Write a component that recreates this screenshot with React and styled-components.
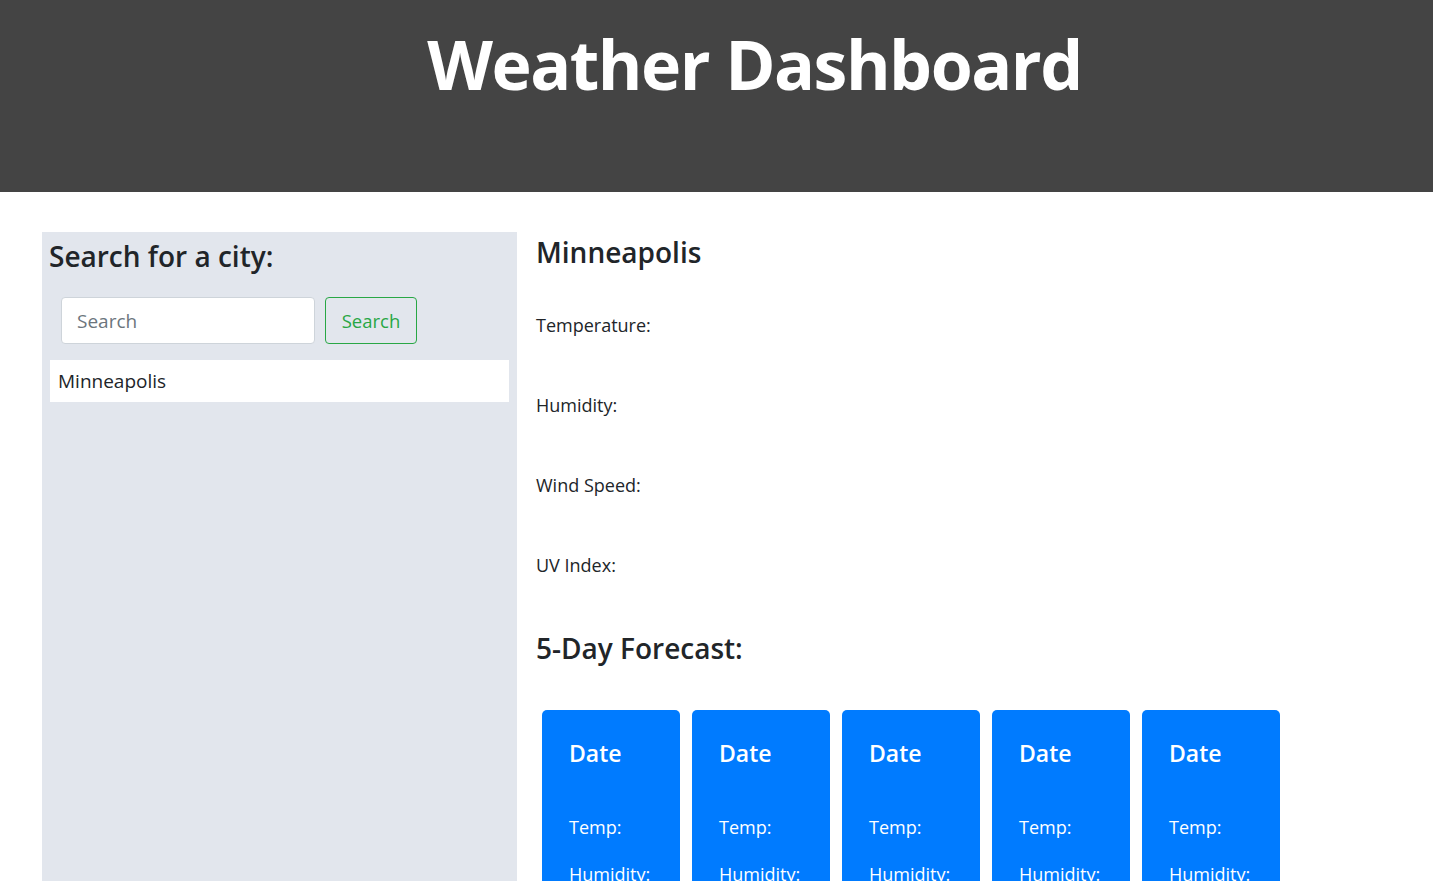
import React from "react";
import styled, { createGlobalStyle } from "styled-components";

const Global = createGlobalStyle`
  html, body { margin: 0; padding: 0; background: #fff; }
  body { font-family: "Segoe UI", "Open Sans", "Noto Sans", sans-serif; color: #212529; }
  * { box-sizing: border-box; }
`;

const Header = styled.header`
  height: 192px;
  background: #444444;
  display: flex;
  justify-content: center;
  padding-top: 22px;
`;

const Title = styled.h1`
  margin: 0;
  color: #fff;
  font-size: 68px;
  font-weight: 700;
  line-height: 84px;
  letter-spacing: -1.5px;
  padding-left: 76px;
`;

const Main = styled.main`
  display: flex;
  padding: 40px 42px 0 42px;
  align-items: stretch;
  height: 689px;
  overflow: hidden;
`;

const Sidebar = styled.aside`
  width: 475px;
  flex: none;
  background: #e2e6ed;
  padding: 6px 8px 0 8px;
`;

const SideHeading = styled.h3`
  margin: 0 0 23px -1px;
  font-size: 28px;
  font-weight: 600;
  line-height: 36px;
`;

const SearchRow = styled.form`
  display: flex;
  gap: 10px;
  padding-left: 11px;
  margin-bottom: 16px;
`;

const SearchInput = styled.input`
  width: 254px;
  height: 47px;
  border: 1px solid #ced4da;
  border-radius: 4px;
  padding: 0 15px;
  font-family: inherit;
  font-size: 19px;
  color: #495057;
  background: #fff;
  &::placeholder { color: #6c757d; }
`;

const OutlineButton = styled.button`
  height: 47px;
  width: 92px;
  border: 1px solid #28a745;
  border-radius: 4px;
  background: transparent;
  color: #28a745;
  font-family: inherit;
  font-size: 18.5px;
  padding: 0;
`;

const CityList = styled.ul`
  list-style: none;
  margin: 0;
  padding: 0;
`;

const CityItem = styled.li`
  background: #fff;
  height: 42px;
  display: flex;
  align-items: center;
  padding-left: 8px;
  font-size: 19px;
`;

const Content = styled.section`
  flex: 1;
  padding-left: 19px;
`;

const CityName = styled.h2`
  margin: 0;
  font-size: 28px;
  font-weight: 600;
  line-height: 40px;
`;

const StatList = styled.div`
  display: flex;
  flex-direction: column;
  gap: 53px;
  margin-top: 40px;
`;

const Stat = styled.p`
  margin: 0;
  font-size: 18px;
  line-height: 27px;
`;

const ForecastHeading = styled.h3`
  margin: 49px 0 0 0;
  font-size: 28px;
  font-weight: 600;
  line-height: 40px;
`;

const CardRow = styled.div`
  display: flex;
  gap: 12px;
  margin-top: 42px;
  padding-left: 6px;
`;

const Card = styled.div`
  width: 138px;
  height: 200px;
  background: #007bff;
  border-radius: 5px;
  color: #fff;
  padding: 25px 0 0 27px;
`;

const CardDate = styled.h5`
  margin: 0;
  font-size: 23px;
  font-weight: 600;
  line-height: 36px;
`;

const CardStat = styled.p`
  margin: 43px 0 0 0;
  font-size: 18px;
  line-height: 27px;
  & + & { margin-top: 20px; }
`;

export default function App() {
  const days = [1, 2, 3, 4, 5];
  return (
    <>
      <Global />
      <Header>
        <Title>Weather Dashboard</Title>
      </Header>
      <Main>
        <Sidebar>
          <SideHeading>Search for a city:</SideHeading>
          <SearchRow onSubmit={(e) => e.preventDefault()}>
            <SearchInput placeholder="Search" />
            <OutlineButton type="submit">Search</OutlineButton>
          </SearchRow>
          <CityList>
            <CityItem>Minneapolis</CityItem>
          </CityList>
        </Sidebar>
        <Content>
          <CityName>Minneapolis</CityName>
          <StatList>
            <Stat>Temperature:</Stat>
            <Stat>Humidity:</Stat>
            <Stat>Wind Speed:</Stat>
            <Stat>UV Index:</Stat>
          </StatList>
          <ForecastHeading>5-Day Forecast:</ForecastHeading>
          <CardRow>
            {days.map((d) => (
              <Card key={d}>
                <CardDate>Date</CardDate>
                <CardStat>Temp:</CardStat>
                <CardStat>Humidity:</CardStat>
              </Card>
            ))}
          </CardRow>
        </Content>
      </Main>
    </>
  );
}
